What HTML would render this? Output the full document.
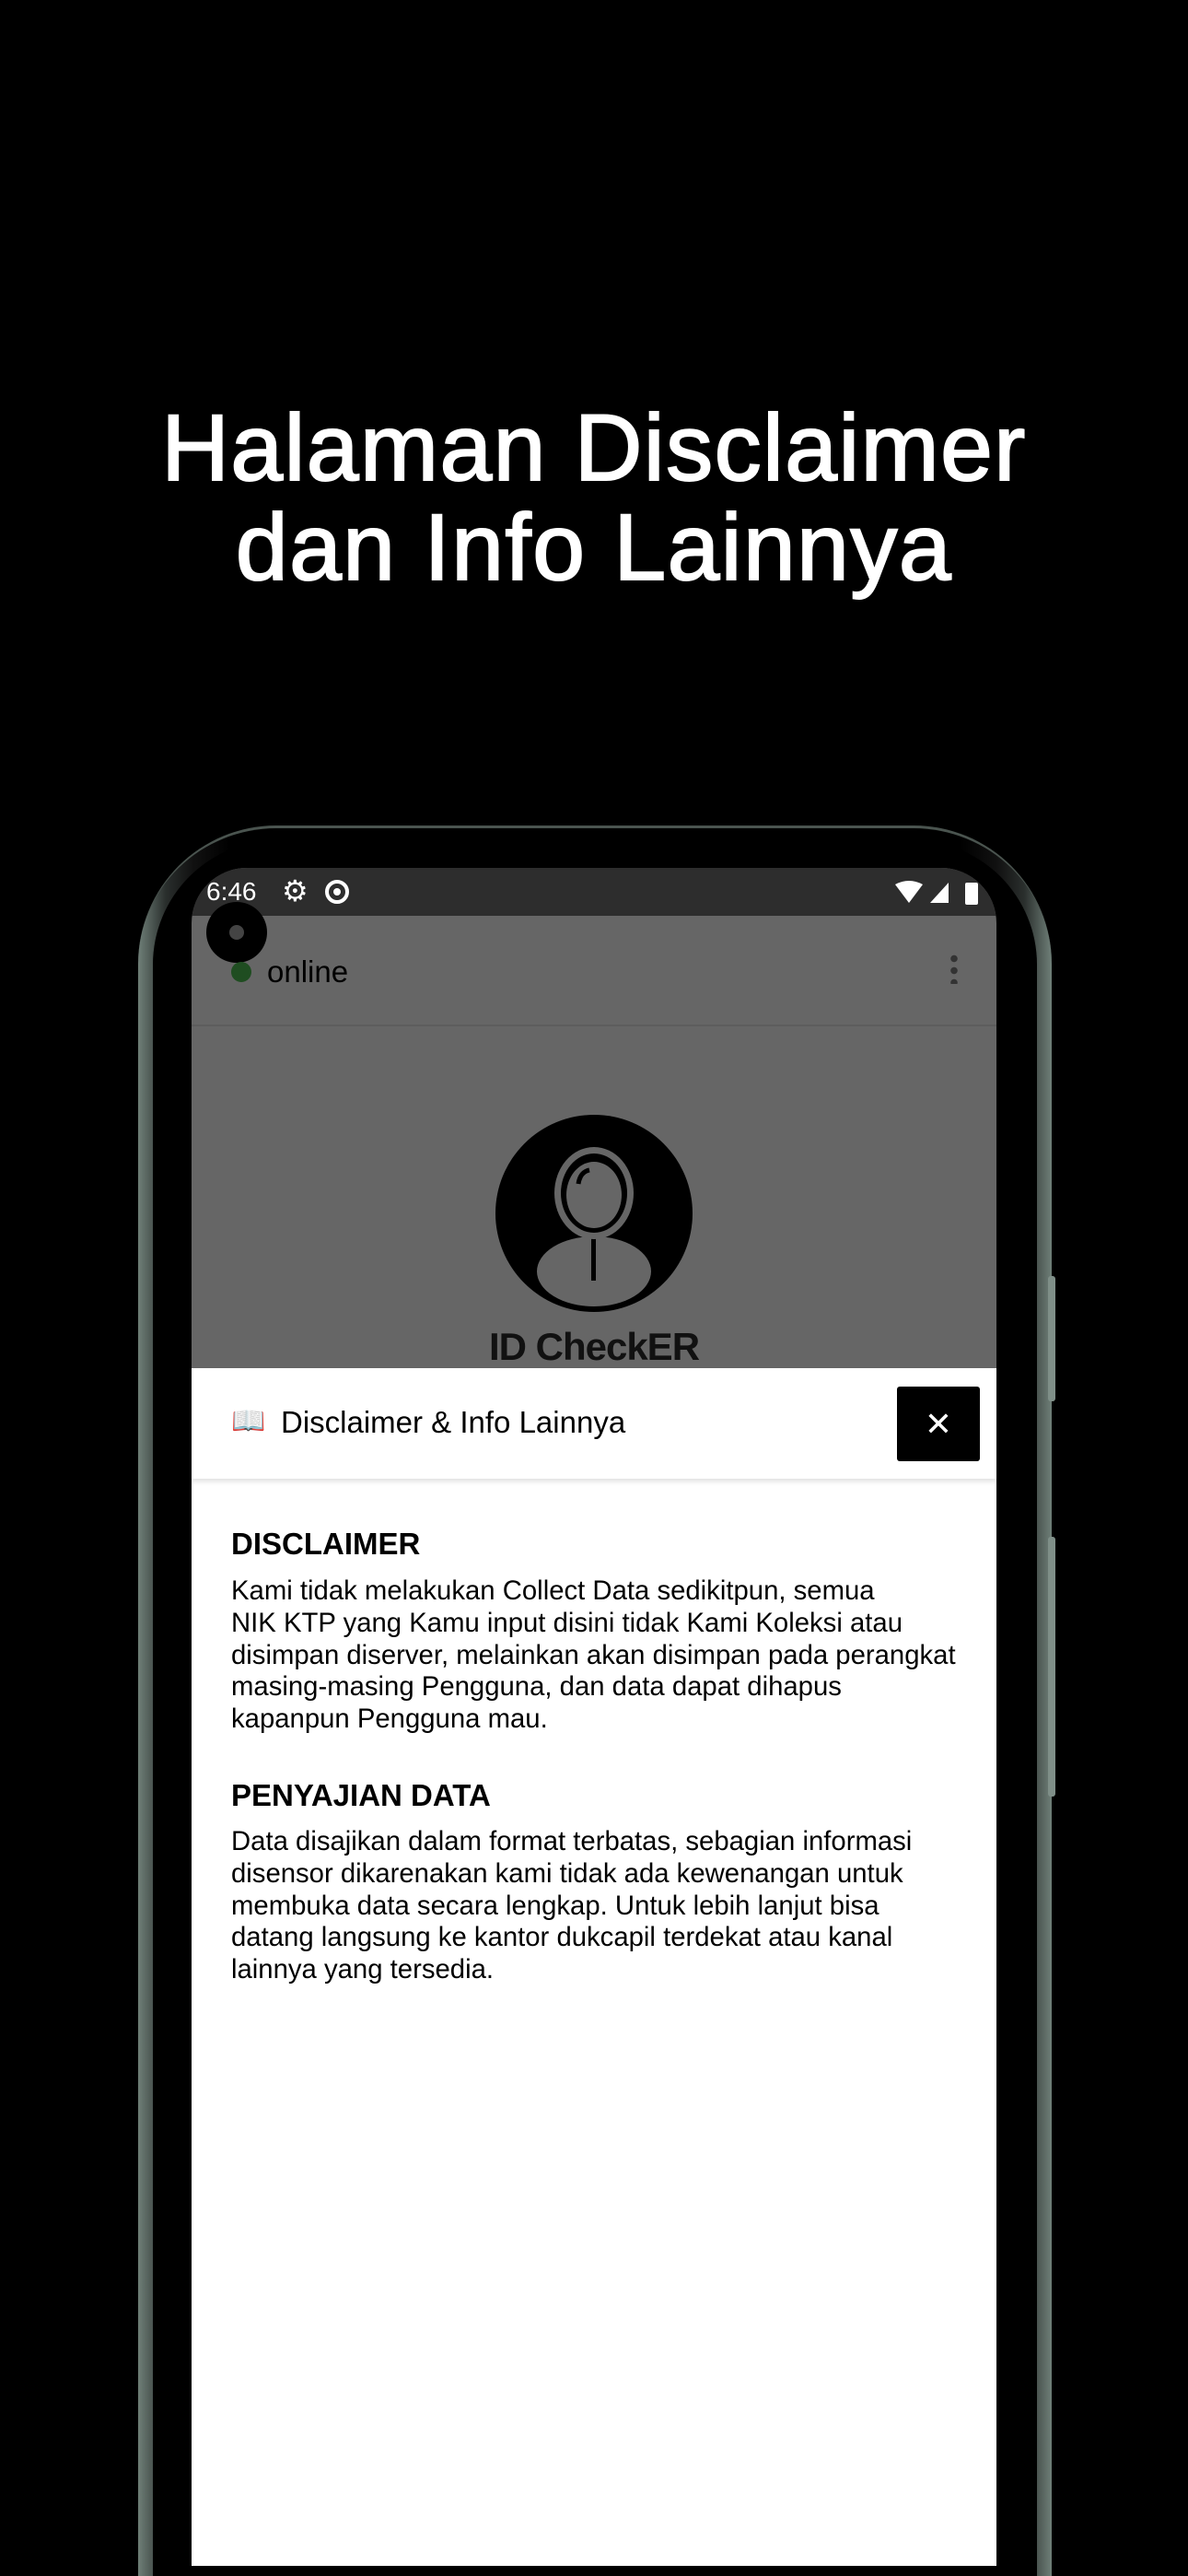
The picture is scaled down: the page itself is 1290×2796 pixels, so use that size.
<!DOCTYPE html>
<html style="width:1290px;height:2796px;overflow:hidden"><head><meta charset="utf-8"><style>
*{margin:0;padding:0;box-sizing:border-box}
body{width:1290px;height:2796px;background:#000;position:relative;overflow:hidden;font-family:"Liberation Sans",sans-serif}
.title{position:absolute;left:0;width:1290px;top:432px;text-align:center;color:#fff;font-size:102px;font-weight:500;line-height:108px;letter-spacing:1.5px;-webkit-text-stroke:2px #fff}
.frame{position:absolute;left:150px;top:896px;width:992px;height:1900px;border-radius:150px 150px 0 0;background:linear-gradient(90deg,#6f7f78,#2a2f2d 3%,#111 6%,#000 10%,#000 90%,#111 94%,#2a2f2d 97%,#6f7f78);border-top:3px solid #4a544f}
.frame2{position:absolute;left:166px;top:912px;width:960px;height:1884px;border-radius:135px 135px 0 0;background:#000}
.btn{position:absolute;left:1138px;width:8px;background:#7f8f88;border-radius:3px}
.screen{position:absolute;left:208px;top:942px;width:874px;height:1843px;border-radius:60px 60px 0 0;overflow:hidden;background:#666}
.sb{position:absolute;left:0;top:0;width:874px;height:52px;background:#2d2d2d;color:#fff;font-size:28px}
.appbar{position:absolute;top:52px;left:0;width:874px;height:120px;border-bottom:2px solid #5d5d5d}
.sheet{position:absolute;top:543px;left:0;width:874px;height:1300px;background:#fff}
.hdr{height:120px;box-shadow:0 3px 5px rgba(0,0,0,.12);position:relative}
.h2{font-size:33px;font-weight:bold;color:#000;position:absolute;left:43px}
.p{font-size:29.3px;line-height:34.8px;color:#000;position:absolute;left:43px;width:830px}
</style></head><body>
<div class="title">Halaman Disclaimer<br>dan Info Lainnya</div>
<div class="frame"></div>
<div class="frame2"></div>
<div class="btn" style="top:1385px;height:136px"></div>
<div class="btn" style="top:1668px;height:282px"></div>
<div class="screen">
 <div class="sb">
  <span style="position:absolute;left:16px;top:10px">6:46</span>
  <span style="position:absolute;left:98px;top:6px;font-size:32px">⚙</span>
  <svg style="position:absolute;left:143px;top:11px" width="30" height="30" viewBox="0 0 30 30"><circle cx="15" cy="15" r="11" fill="none" stroke="#fff" stroke-width="4"/><circle cx="15" cy="15" r="4" fill="#fff"/></svg>
  <svg style="position:absolute;left:762px;top:12px" width="100" height="30" viewBox="0 0 100 30"><path d="M2 6 Q17 -2 32 6 L17 26Z" fill="#fff"/><path d="M40 26 L60 4 L60 26Z" fill="#fff"/><rect x="78" y="4" width="14" height="24" rx="2" fill="#fff"/></svg>
 </div>
 <div style="position:absolute;left:16px;top:37px;width:66px;height:66px;border-radius:50%;background:#000"><div style="position:absolute;left:25px;top:25px;width:16px;height:16px;border-radius:50%;background:#444"></div></div>
 <div class="appbar">
  <div style="position:absolute;left:43px;top:50px;width:22px;height:22px;border-radius:50%;background:#1f4d21"></div>
  <span style="position:absolute;left:82px;top:42px;font-size:33px;color:#000">online</span>
  <div style="position:absolute;left:824px;top:40px;width:8px;height:34px;background:radial-gradient(circle,#333 3.5px,transparent 4px) 0 0/8px 13px"></div>
 </div>
 <svg style="position:absolute;left:330px;top:268px" width="214" height="214" viewBox="0 0 214 214"><circle cx="107" cy="107" r="107" fill="#000"/><ellipse cx="107" cy="170" rx="62" ry="38" fill="#666"/><rect x="104" y="120" width="5" height="60" fill="#000"/><ellipse cx="107" cy="85" rx="43" ry="50" fill="#666"/><ellipse cx="107" cy="85" rx="36" ry="43" fill="#000"/><ellipse cx="107" cy="87" rx="30" ry="36" fill="#666"/><path d="M90 75 Q92 62 102 60" stroke="#000" stroke-width="5" fill="none"/></svg>
 <div style="position:absolute;left:0;width:874px;top:496px;text-align:center;font-size:42px;font-weight:bold;color:#111;letter-spacing:-1px">ID CheckER</div>
 <div class="sheet">
  <div class="hdr">
   <span style="position:absolute;left:43px;top:40px;font-size:30px">📖</span>
   <span style="position:absolute;left:97px;top:40px;font-size:33px;color:#000">Disclaimer &amp; Info Lainnya</span>
   <div style="position:absolute;left:766px;top:20px;width:90px;height:81px;background:#000;border-radius:3px;color:#fff;font-size:36px;text-align:center;line-height:81px">✕</div>
  </div>
  <div class="h2" style="top:172px">DISCLAIMER</div>
  <div class="p" style="top:225px">Kami tidak melakukan Collect Data sedikitpun, semua<br>NIK KTP yang Kamu input disini tidak Kami Koleksi atau<br>disimpan diserver, melainkan akan disimpan pada perangkat<br>masing-masing Pengguna, dan data dapat dihapus<br>kapanpun Pengguna mau.</div>
  <div class="h2" style="top:445px">PENYAJIAN DATA</div>
  <div class="p" style="top:497px">Data disajikan dalam format terbatas, sebagian informasi<br>disensor dikarenakan kami tidak ada kewenangan untuk<br>membuka data secara lengkap. Untuk lebih lanjut bisa<br>datang langsung ke kantor dukcapil terdekat atau kanal<br>lainnya yang tersedia.</div>
 </div>
</div>
</body></html>
